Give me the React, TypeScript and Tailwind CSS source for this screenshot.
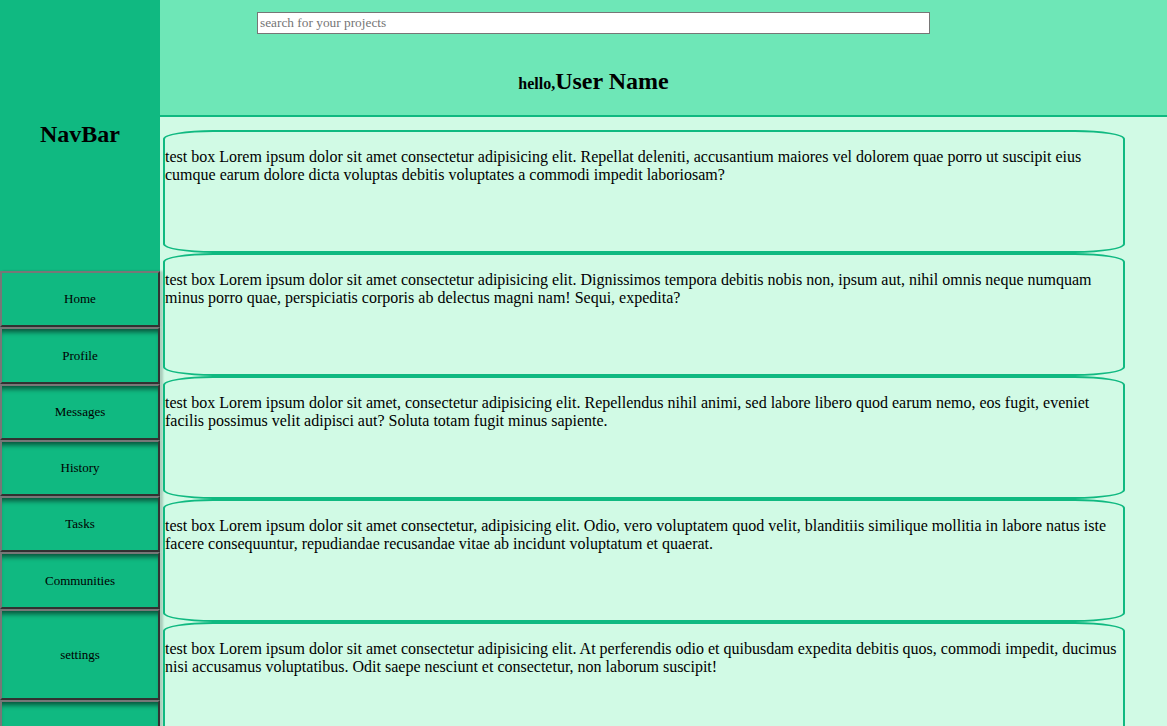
const navItems = [
  { label: "Home", h: "h-[56px]" },
  { label: "Profile", h: "h-[57px]" },
  { label: "Messages", h: "h-[56px]" },
  { label: "History", h: "h-[56px]" },
  { label: "Tasks", h: "h-[56px]" },
  { label: "Communities", h: "h-[57px]" },
  { label: "settings", h: "h-[91px]" },
  { label: "", h: "h-[91px]" },
];

const boxes = [
  "test box Lorem ipsum dolor sit amet consectetur adipisicing elit. Repellat deleniti, accusantium maiores vel dolorem quae porro ut suscipit eius cumque earum dolore dicta voluptas debitis voluptates a commodi impedit laboriosam?",
  "test box Lorem ipsum dolor sit amet consectetur adipisicing elit. Dignissimos tempora debitis nobis non, ipsum aut, nihil omnis neque numquam minus porro quae, perspiciatis corporis ab delectus magni nam! Sequi, expedita?",
  "test box Lorem ipsum dolor sit amet, consectetur adipisicing elit. Repellendus nihil animi, sed labore libero quod earum nemo, eos fugit, eveniet facilis possimus velit adipisci aut? Soluta totam fugit minus sapiente.",
  "test box Lorem ipsum dolor sit amet consectetur, adipisicing elit. Odio, vero voluptatem quod velit, blanditiis similique mollitia in labore natus iste facere consequuntur, repudiandae recusandae vitae ab incidunt voluptatum et quaerat.",
  "test box Lorem ipsum dolor sit amet consectetur adipisicing elit. At perferendis odio et quibusdam expedita debitis quos, commodi impedit, ducimus nisi accusamus voluptatibus. Odit saepe nesciunt et consectetur, non laborum suscipit!",
];

export default function App() {
  return (
    <div className="flex min-h-screen bg-[#d1fae5] text-black font-['Liberation_Serif',serif]">
      {/* sidebar */}
      <aside className="w-[160px] shrink-0 flex flex-col bg-[#10b981]">
        <div className="h-[271px] pb-[4px] flex items-center justify-center">
          <h2 className="text-[24px] font-bold">NavBar</h2>
        </div>
        {navItems.map((item, i) => (
          <button
            key={i}
            className={`${item.h} w-full flex items-center justify-center text-[13px] bg-[#10b981] border-2 border-t-[#777] border-l-[#777] border-b-[#333] border-r-[#333] ${
              i > 0 ? "shadow-[inset_0_6px_5px_-3px_rgba(0,0,0,0.55),3px_0_2px_rgba(0,0,0,0.18)]" : "shadow-[3px_0_2px_rgba(0,0,0,0.18)]"
            }`}
          >
            {item.label}
          </button>
        ))}
      </aside>

      {/* main */}
      <div className="flex-1 flex flex-col">
        <header className="h-[117px] bg-[#6ee7b7] border-b-2 border-[#10b981]">
          <div className="ml-[97px] w-[673px] pt-[12px]">
            <input
              type="text"
              placeholder="search for your projects"
              className="block w-full h-[22px] bg-white border border-[#767676] px-[2px] text-[13.33px] placeholder:text-[#757575] outline-none"
            />
            <h1 className="mt-[35px] text-center font-bold leading-none">
              <span className="text-[16px]">hello,</span>
              <span className="text-[24px]">User Name</span>
            </h1>
          </div>
        </header>

        <div className="pt-[13px] pl-[3px] flex flex-col">
          {boxes.map((text, i) => (
            <div
              key={i}
              className="w-[962px] h-[123px] border-2 border-[#10b981] rounded-[50px/9px]"
            >
              <p className="mt-[16px] text-[16px] leading-[18px]">{text}</p>
            </div>
          ))}
        </div>
      </div>
    </div>
  );
}
